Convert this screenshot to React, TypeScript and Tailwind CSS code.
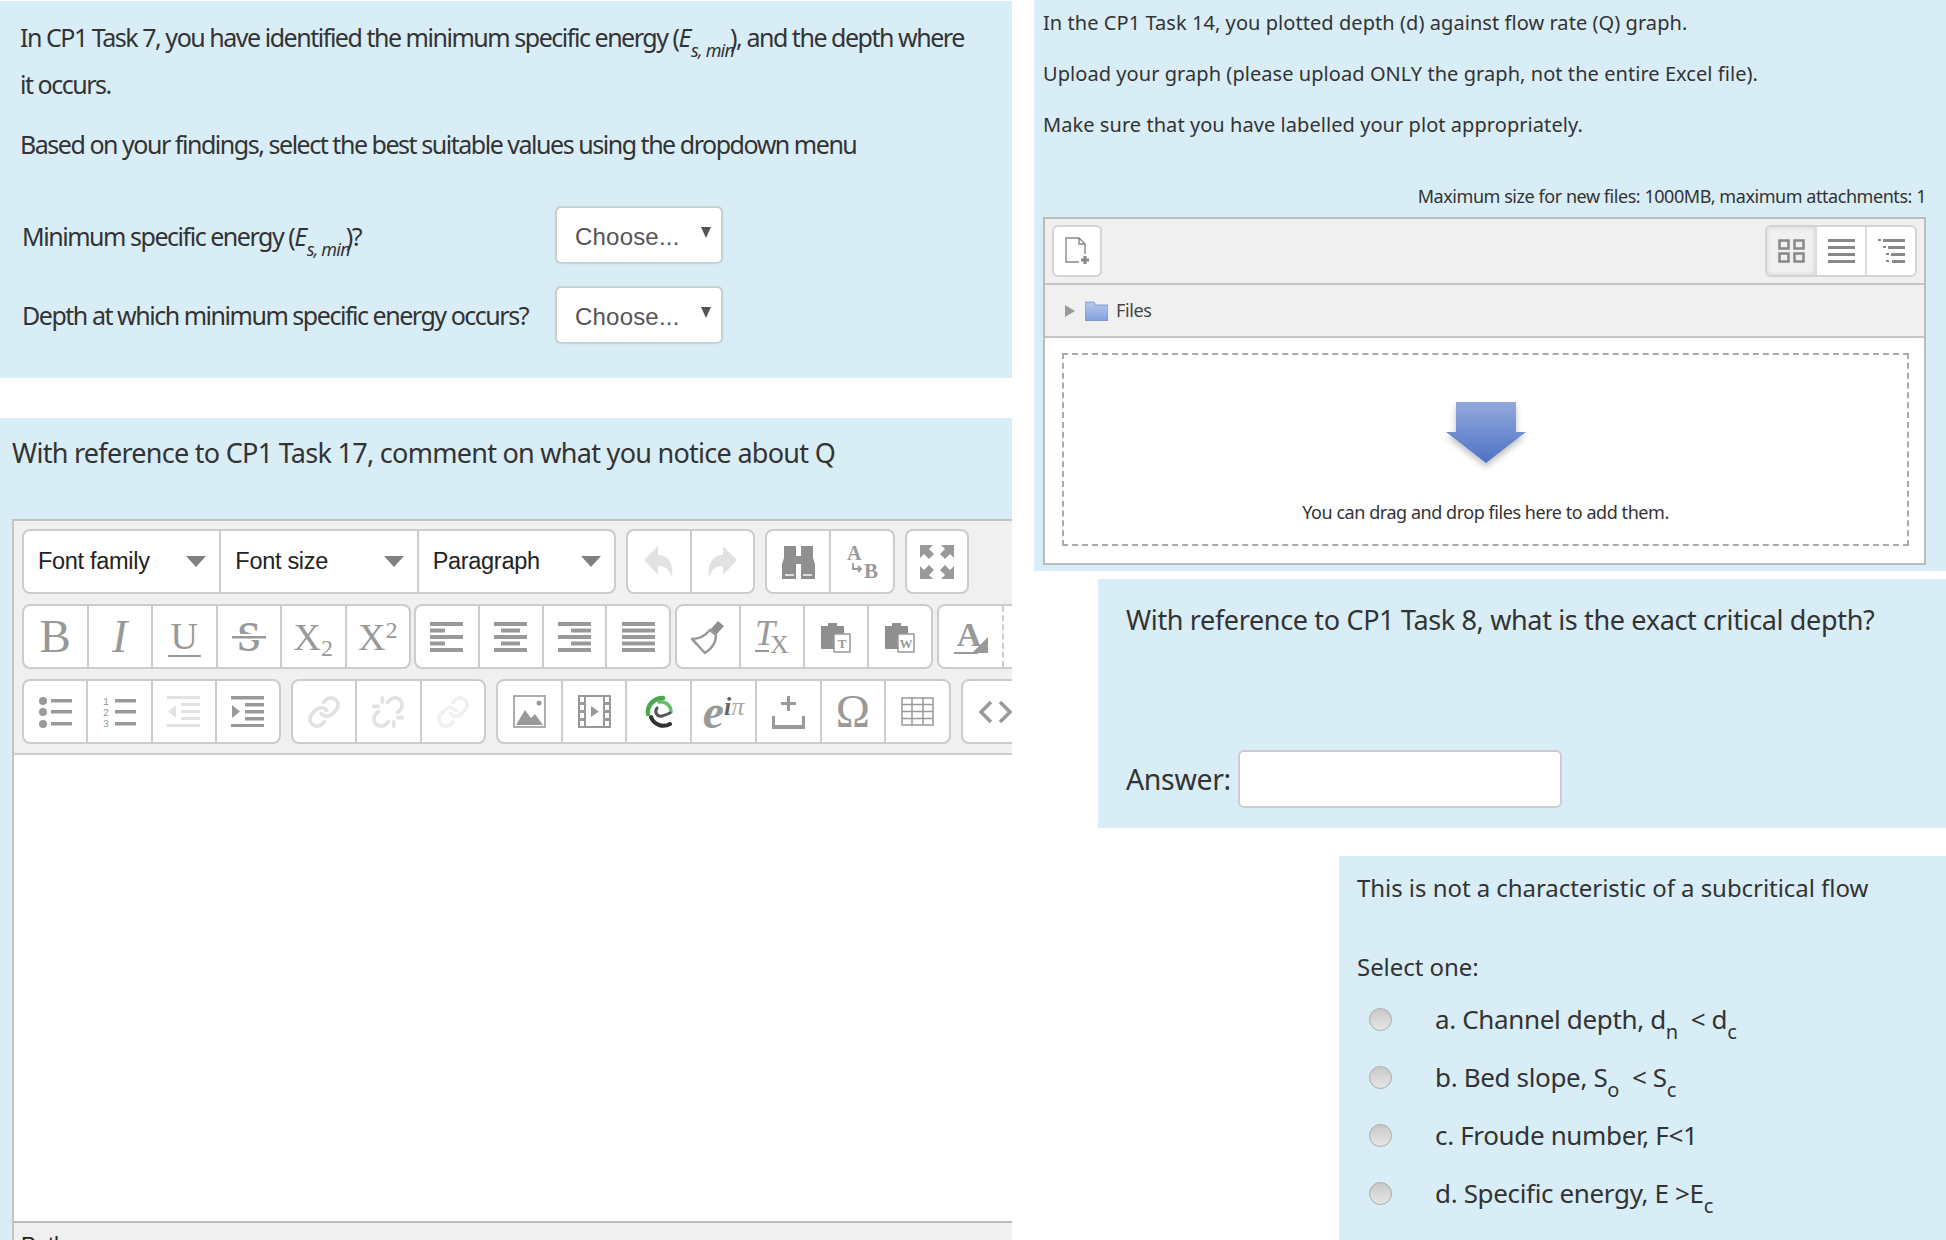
import type { ReactNode } from "react";
import { Link as LinkIcon, Unlink } from "lucide-react";

const sans = "font-['Noto_Sans',sans-serif]";

function SubE({ label = "s, min" }: { label?: string }) {
  return (
    <>
      <i>E</i>
      <sub className="ml-[1px] mr-[-4px] bottom-[-0.55em] text-[18px] italic tracking-[-0.8px]">{label}</sub>
    </>
  );
}

function Choose() {
  return (
    <div className="flex h-[56px] w-[166px] items-start rounded-[5px] border border-[#ccc] bg-white pl-[18px] pr-[10px] shadow-[0_0_2px_#999] font-['Liberation_Sans',sans-serif] text-[24px] text-[#555]">
      <span className="mt-[11px] tracking-[0.2px]">Choose...</span>
      <svg className="ml-auto mt-[19px]" width="10" height="11" viewBox="0 0 10 11">
        <path d="M0 0h10L5 11z" fill="#555" />
      </svg>
    </div>
  );
}

function Group({ className, children }: { className: string; children: ReactNode }) {
  return (
    <div className={`flex h-[65px] shrink-0 overflow-hidden rounded-[8px] border-2 border-[#ccc] bg-white ${className}`}>
      {children}
    </div>
  );
}

function Cell({ children }: { children: ReactNode }) {
  return (
    <div className="flex flex-1 items-center justify-center border-r-2 border-[#ccc] last:border-r-0 text-[#999]">
      {children}
    </div>
  );
}

function DropCell({ label }: { label: string }) {
  return (
    <div className="flex flex-1 items-center border-r-2 border-[#ccc] pl-[14px] pr-[13px] last:border-r-0 font-['Liberation_Sans',sans-serif] text-[23.5px] tracking-[-0.3px] text-[#222]">
      <span className="pt-[1px]">{label}</span>
      <svg className="ml-auto" width="20" height="11" viewBox="0 0 20 11">
        <path d="M0 0h20L10 11z" fill="#808080" />
      </svg>
    </div>
  );
}

function Lines({ rows, color = "#999" }: { rows: [number, number][]; color?: string }) {
  return (
    <svg width="33" height="30" viewBox="0 0 33 30">
      {rows.map(([x, w], i) => (
        <rect key={i} x={x} y={i * 6.5} width={w} height="4" fill={color} />
      ))}
    </svg>
  );
}

function Serif({ className, children }: { className: string; children: ReactNode }) {
  return <span className={`font-['Liberation_Serif',serif] leading-none text-[#999] ${className}`}>{children}</span>;
}

function Clip({ letter }: { letter: string }) {
  return (
    <svg width="30" height="33" viewBox="0 0 30 33">
      <path d="M0 6h7V3h9v3h7v9h-9v14H0z" fill="#8f8f8f" />
      <rect x="13" y="14" width="16" height="18" fill="#fff" stroke="#999" strokeWidth="1.5" />
      <text x="21" y="28" textAnchor="middle" fontSize="13" fontFamily="Liberation Serif" fontWeight="700" fill="#999">
        {letter}
      </text>
    </svg>
  );
}

function Radio() {
  return (
    <span className="h-[23px] w-[23px] shrink-0 rounded-full border border-[#aaa] bg-gradient-to-b from-[#c8c8c8] to-[#e6e6e6]" />
  );
}

export default function App() {
  return (
    <div className={`flex h-[1240px] w-[1946px] overflow-hidden bg-white text-[#333] ${sans}`}>
      <div className="flex w-[1012px] shrink-0 flex-col pt-[1px]">
        <section className="h-[377px] bg-[#d9edf7] pl-[20px] text-[25px] tracking-[-1.47px]">
          <p className="pt-[13px] leading-[47px]">
            In CP1 Task 7, you have identified the minimum specific energy (<SubE />), and the depth where
            <br />
            it occurs.
          </p>
          <p className="mt-[13px] leading-[47px]">Based on your findings, select the best suitable values using the dropdown menu</p>
          <div className="mt-[39px] flex items-center pl-[2px]">
            <span className="w-[534px] pt-[3px]">Minimum specific energy (<SubE />)?</span>
            <Choose />
          </div>
          <div className="mt-[24px] flex items-center pl-[2px]">
            <span className="w-[534px] pt-[2px]">Depth at which minimum specific energy occurs?</span>
            <Choose />
          </div>
        </section>

        <section className="mt-[40px] flex min-h-0 flex-1 flex-col bg-[#d9edf7] pl-[12px]">
          <h2 className="h-[101px] pt-[17px] text-[27px] font-normal leading-[36px] tracking-[-0.72px]">
            With reference to CP1 Task 17, comment on what you notice about Q
          </h2>
          <div className="flex min-h-0 flex-1 flex-col border-l-2 border-t-2 border-[#c4c4c4] bg-white">
            <div className="flex h-[234px] shrink-0 flex-col gap-[10px] overflow-hidden border-b-2 border-[#ccc] bg-[#f0f0f0] pl-[8px] pt-[8px]">
              <div className="flex gap-[10px]">
                <Group className="w-[594px]">
                  <DropCell label="Font family" />
                  <DropCell label="Font size" />
                  <DropCell label="Paragraph" />
                </Group>
                <Group className="w-[129px]">
                  <Cell>
                    <svg width="30" height="34" viewBox="0 0 30 34">
                      <path d="M14 1v9c10 0 16 8 14 23-2-8-6-12-14-12v9L0 15z" fill="#e2e2e2" />
                    </svg>
                  </Cell>
                  <Cell>
                    <svg width="30" height="34" viewBox="0 0 30 34">
                      <path d="M16 1v9C6 10 0 18 2 33c2-8 6-12 14-12v9l14-15z" fill="#e2e2e2" />
                    </svg>
                  </Cell>
                </Group>
                <Group className="w-[130px]">
                  <Cell>
                    <svg width="33" height="34" viewBox="0 0 33 34">
                      <path d="M2 1h12v10h5V1h12v12l2 6v15H19V19h-5v15H0V19l2-6z" fill="#8f8f8f" />
                      <rect x="3" y="29" width="9" height="2" fill="#ddd" />
                      <rect x="21" y="29" width="9" height="2" fill="#ddd" />
                    </svg>
                  </Cell>
                  <Cell>
                    <svg width="33" height="34" viewBox="0 0 33 34">
                      <text x="1" y="15" fontSize="20" fontWeight="700" fontFamily="Liberation Serif" fill="#999">A</text>
                      <text x="18" y="33" fontSize="21" fontWeight="700" fontFamily="Liberation Serif" fill="#999">B</text>
                      <path d="M7 18v6h8m-3-3l3 3-3 3" fill="none" stroke="#999" strokeWidth="1.8" />
                    </svg>
                  </Cell>
                </Group>
                <Group className="w-[64px]">
                  <Cell>
                    <svg width="34" height="34" viewBox="0 0 34 34" fill="#999">
                      <path d="M0 0h13l-4 4 5 5-5 5-5-5-4 4zM34 0v13l-4-4-5 5-5-5 5-5-4-4zM0 34V21l4 4 5-5 5 5-5 5 4 4zM34 34H21l4-4-5-5 5-5 5 5 4-4z" />
                    </svg>
                  </Cell>
                </Group>
              </div>

              <div className="flex">
                <Group className="w-[389px]">
                  <Cell><Serif className="text-[47px] font-normal">B</Serif></Cell>
                  <Cell><Serif className="text-[46px] italic">I</Serif></Cell>
                  <Cell><Serif className="border-b-2 border-[#999] px-[3px] text-[38px]">U</Serif></Cell>
                  <Cell>
                    <svg width="34" height="34" viewBox="0 0 34 34">
                      <text x="17" y="31" textAnchor="middle" fontSize="42" fontWeight="700" fontFamily="Liberation Serif" fill="#999">S</text>
                      <rect y="14" width="34" height="6" fill="#fff" />
                      <rect y="16" width="34" height="2.5" fill="#999" />
                    </svg>
                  </Cell>
                  <Cell><Serif className="text-[38px]">X<sub className="text-[24px]">2</sub></Serif></Cell>
                  <Cell><Serif className="text-[38px]">X<sup className="text-[24px]">2</sup></Serif></Cell>
                </Group>
                <Group className="ml-[3px] w-[257px]">
                  <Cell><Lines rows={[[0, 33], [0, 15], [0, 33], [0, 15], [0, 33]]} /></Cell>
                  <Cell><Lines rows={[[0, 33], [7, 19], [0, 33], [7, 19], [0, 33]]} /></Cell>
                  <Cell><Lines rows={[[0, 33], [13, 20], [0, 33], [13, 20], [0, 33]]} /></Cell>
                  <Cell><Lines rows={[[0, 33], [0, 33], [0, 33], [0, 33], [0, 33]]} /></Cell>
                </Group>
                <Group className="ml-[4px] w-[258px]">
                  <Cell>
                    <svg width="34" height="34" viewBox="0 0 34 34">
                      <path d="M27 1l6 5-8 9-6-5z" fill="#8f8f8f" />
                      <path d="M19 10l6 5c0 6-3 13-11 18C10 29 5 23 1 19c8 0 13-3 18-9z" fill="#fff" stroke="#999" strokeWidth="2.5" />
                    </svg>
                  </Cell>
                  <Cell>
                    <svg width="34" height="34" viewBox="0 0 34 34">
                      <text x="0" y="25" fontSize="36" fontStyle="italic" fontFamily="Liberation Serif" fill="#999">T</text>
                      <text x="15" y="33" fontSize="26" fontFamily="Liberation Serif" fill="#999">X</text>
                      <rect x="0" y="30" width="14" height="2" fill="#999" />
                    </svg>
                  </Cell>
                  <Cell><Clip letter="T" /></Cell>
                  <Cell><Clip letter="W" /></Cell>
                </Group>
                <Group className="ml-[4px] w-[100px] !border-r-0">
                  <div className="flex w-[63px] items-center justify-center">
                    <svg width="34" height="36" viewBox="0 0 34 36">
                      <text x="15" y="27" textAnchor="middle" fontSize="34" fontWeight="700" fontFamily="Liberation Serif" fill="#999">A</text>
                      <path d="M34 18v16H18z" fill="#999" />
                      <rect y="33" width="24" height="2" fill="#999" />
                    </svg>
                  </div>
                  <div className="h-full border-l-2 border-dashed border-[#ccc]" />
                </Group>
              </div>

              <div className="flex gap-[10px]">
                <Group className="w-[259px]">
                  <Cell>
                    <svg width="33" height="32" viewBox="0 0 33 32" fill="#999">
                      <circle cx="4" cy="5" r="4" /><circle cx="4" cy="16" r="4" /><circle cx="4" cy="28" r="4" />
                      <rect x="12" y="3" width="21" height="3.500" /><rect x="12" y="14" width="21" height="3.500" /><rect x="12" y="26" width="21" height="3.500" />
                    </svg>
                  </Cell>
                  <Cell>
                    <svg width="33" height="32" viewBox="0 0 33 32" fill="#999">
                      <text x="0" y="9" fontSize="10" fontFamily="Liberation Mono">1</text>
                      <text x="0" y="20" fontSize="10" fontFamily="Liberation Mono">2</text>
                      <text x="0" y="31" fontSize="10" fontFamily="Liberation Mono">3</text>
                      <rect x="12" y="3" width="21" height="3.500" /><rect x="12" y="14" width="21" height="3.500" /><rect x="12" y="26" width="21" height="3.500" />
                    </svg>
                  </Cell>
                  <Cell>
                    <svg width="33" height="31" viewBox="0 0 33 31" fill="#e2e2e2">
                      <rect width="33" height="3" /><rect x="14" y="7" width="19" height="3" /><rect x="14" y="14" width="19" height="3" /><rect x="14" y="21" width="19" height="3" /><rect y="28" width="33" height="3" />
                      <path d="M9 9v13L1 15.500z" />
                    </svg>
                  </Cell>
                  <Cell>
                    <svg width="33" height="31" viewBox="0 0 33 31" fill="#999">
                      <rect width="33" height="3.500" /><rect x="14" y="7" width="19" height="3.500" /><rect x="14" y="14" width="19" height="3.500" /><rect x="14" y="21" width="19" height="3.500" /><rect y="28" width="33" height="3.500" />
                      <path d="M1 9v13l8-6.500z" />
                    </svg>
                  </Cell>
                </Group>
                <Group className="w-[195px]">
                  <Cell><LinkIcon size={34} strokeWidth={2.6} className="text-[#e2e2e2]" /></Cell>
                  <Cell><Unlink size={34} strokeWidth={2.6} className="text-[#e2e2e2]" /></Cell>
                  <Cell><LinkIcon size={34} strokeWidth={2.6} className="text-[#f0f0f0]" /></Cell>
                </Group>
                <Group className="w-[455px]">
                  <Cell>
                    <svg width="33" height="33" viewBox="0 0 33 33">
                      <rect x="1" y="1" width="31" height="31" fill="#fff" stroke="#999" strokeWidth="1.6" />
                      <path d="M3 30l9-15 6 8 4-4 8 11z" fill="#999" />
                      <circle cx="26" cy="8" r="2.500" fill="#999" />
                    </svg>
                  </Cell>
                  <Cell>
                    <svg width="33" height="33" viewBox="0 0 33 33" fill="#999">
                      <path fillRule="evenodd" d="M0 0h33v33H0zM2 2v5h4V2zM2 10v5h4v-5zM2 18v5h4v-5zM2 26v5h4v-5zM27 2v5h4V2zM27 10v5h4v-5zM27 18v5h4v-5zM27 26v5h4v-5zM8 2v29h17V2z" />
                      <path d="M13 11v11l8-5.500z" />
                    </svg>
                  </Cell>
                  <Cell>
                    <svg width="30" height="34" viewBox="0 0 30 34" fill="none" strokeLinecap="round">
                      <path d="M4 19C3 10 10 3 19 3" stroke="#4aa84f" strokeWidth="4.500" />
                      <path d="M15 7c6-1 12 3 12 10" stroke="#66bb66" strokeWidth="3.500" />
                      <path d="M7 22c3 8 12 11 19 7" stroke="#333" strokeWidth="4" />
                      <path d="M13 13c-3 4 0 9 5 8 4-1 6-2 8-3" stroke="#555" strokeWidth="3" />
                    </svg>
                  </Cell>
                  <Cell>
                    <Serif className="text-[48px] font-bold italic text-[#666]">
                      e<sup className="text-[26px] text-[#666]">i<span className="font-normal text-[#aaa]">π</span></sup>
                    </Serif>
                  </Cell>
                  <Cell>
                    <svg width="33" height="34" viewBox="0 0 33 34" fill="#999">
                      <path d="M15 1h3v6h6v3h-6v6h-3v-6H9V7h6z" />
                      <path d="M0 21h3v9h27v-9h3v13H0z" />
                    </svg>
                  </Cell>
                  <Cell><Serif className="text-[46px]">Ω</Serif></Cell>
                  <Cell>
                    <svg width="33" height="29" viewBox="0 0 33 29" fill="none" stroke="#999" strokeWidth="1.5">
                      <rect x="1" y="1" width="31" height="27" />
                      <path d="M1 7.500h31M1 14.500h31M1 21.500h31M11 1v27M22 1v27" />
                    </svg>
                  </Cell>
                </Group>
                <Group className="w-[80px]">
                  <div className="flex w-[64px] items-center justify-center">
                    <svg width="33" height="24" viewBox="0 0 33 24" fill="none" stroke="#999" strokeWidth="3.500">
                      <path d="M12 2L2 12l10 10M21 2l10 10-10 10" />
                    </svg>
                  </div>
                </Group>
              </div>
            </div>
            <div className="flex-1" />
            <div className="h-[19px] shrink-0 overflow-hidden border-t-2 border-[#bbb] bg-[#f0f0f0] pl-[7px] pt-[9px] font-['Liberation_Sans',sans-serif] text-[22px] leading-[26px] text-[#222]">
              Path
            </div>
          </div>
        </section>
      </div>

      <div className="ml-[22px] flex min-w-0 flex-1 flex-col items-end">
        <section className="h-[571px] w-full shrink-0 bg-[#d9edf7] pl-[9px] pr-[20px] text-[20px] tracking-[0.06px]">
          <p className="pt-[8px] leading-[30px]">In the CP1 Task 14, you plotted depth (d) against flow rate (Q) graph.</p>
          <p className="mt-[21px] leading-[30px]">Upload your graph (please upload ONLY the graph, not the entire Excel file).</p>
          <p className="mt-[21px] leading-[30px]">Make sure that you have labelled your plot appropriately.</p>
          <p className="mt-[43px] text-right text-[18px] leading-[26px] tracking-[-0.45px]">Maximum size for new files: 1000MB, maximum attachments: 1</p>
          <div className="mt-[8px] h-[348px] border-2 border-[#bbb] bg-white">
            <div className="flex h-[66px] items-center justify-between border-b-2 border-[#c4c4c4] bg-[#f0f0f0] px-[7px]">
              <div className="flex h-[52px] w-[50px] items-center justify-center rounded-[6px] border-2 border-[#d4d4d4] bg-white">
                <svg width="26" height="30" viewBox="0 0 26 30" fill="none" stroke="#888" strokeWidth="1.400">
                  <path d="M15 26H2V2h13l6 6v10M15 2v6h6" />
                  <path d="M21 20v8M17 24h8" strokeWidth="3" />
                </svg>
              </div>
              <div className="flex h-[52px] w-[152px] overflow-hidden rounded-[6px] border-2 border-[#d4d4d4] bg-white">
                <div className="flex flex-1 items-center justify-center border-r-2 border-[#ddd] bg-[#f0f0f0] shadow-[inset_0_0_4px_#ccc]">
                  <svg width="27" height="24" viewBox="0 0 27 24" fill="none" stroke="#888" strokeWidth="2.500">
                    <rect x="1.500" y="1.500" width="9" height="8" /><rect x="16.500" y="1.500" width="9" height="8" />
                    <rect x="1.500" y="14.500" width="9" height="8" /><rect x="16.500" y="14.500" width="9" height="8" />
                  </svg>
                </div>
                <div className="flex flex-1 items-center justify-center border-r-2 border-[#ddd]">
                  <svg width="27" height="24" viewBox="0 0 27 24" fill="#888">
                    <rect width="27" height="3" /><rect y="7" width="27" height="3" /><rect y="14" width="27" height="3" /><rect y="21" width="27" height="3" />
                  </svg>
                </div>
                <div className="flex flex-1 items-center justify-center">
                  <svg width="27" height="24" viewBox="0 0 27 24" fill="#888">
                    <rect width="3" height="2" /><rect x="5" width="22" height="3" /><rect x="5" y="7" width="3" height="2" /><rect x="10" y="7" width="17" height="3" />
                    <rect x="8" y="14" width="3" height="2" /><rect x="13" y="14" width="14" height="3" /><rect x="8" y="21" width="3" height="2" /><rect x="14" y="21" width="13" height="3" />
                  </svg>
                </div>
              </div>
            </div>
            <div className="flex h-[53px] items-center gap-[10px] border-b-2 border-[#c4c4c4] bg-[#f0f0f0] pl-[20px] text-[18px] tracking-[-0.4px]">
              <svg width="10" height="12" viewBox="0 0 10 12"><path d="M0 0l10 6-10 6z" fill="#999" /></svg>
              <span className="flex items-center gap-[8px]">
                <svg width="23" height="20" viewBox="0 0 23 20">
                  <defs>
                    <linearGradient id="folder" x1="0" y1="0" x2="0" y2="1">
                      <stop offset="0" stopColor="#b9c9ea" />
                      <stop offset="1" stopColor="#7f9fdc" />
                    </linearGradient>
                  </defs>
                  <path d="M0 1h9l2 3h12v16H0z" fill="url(#folder)" stroke="#6f8fd0" strokeWidth="0.800" />
                </svg>
                <span className="text-[#444]">Files</span>
              </span>
            </div>
            <div className="pb-[18px] pl-[17px] pr-[15px] pt-[15px]">
              <div className="flex h-[193px] flex-col items-center border-2 border-dashed border-[#aaa] pt-[45px]">
                <svg width="92" height="78" viewBox="0 0 92 78">
                  <defs>
                    <linearGradient id="arrow" x1="0" y1="0" x2="0" y2="1">
                      <stop offset="0" stopColor="#93a9dc" />
                      <stop offset="1" stopColor="#4f72c6" />
                    </linearGradient>
                    <filter id="arrowShadow" x="-20%" y="-20%" width="140%" height="150%">
                      <feDropShadow dx="0" dy="4" stdDeviation="3" floodColor="#000" floodOpacity="0.25" />
                    </filter>
                  </defs>
                  <path d="M16 2h60v30h10L46 63 6 32h10z" fill="url(#arrow)" filter="url(#arrowShadow)" />
                </svg>
                <p className="mt-[21px] text-[18px] leading-[26px] tracking-[-0.45px] text-[#333]">You can drag and drop files here to add them.</p>
              </div>
            </div>
          </div>
        </section>

        <section className="mt-[8px] h-[249px] w-[848px] shrink-0 bg-[#d9edf7] pl-[28px] text-[27px] tracking-[-0.35px]">
          <p className="pt-[23px] leading-[36px]">With reference to CP1 Task 8, what is the exact critical depth?</p>
          <div className="mt-[112px] flex items-center">
            <label className="w-[112px] text-[28.5px]">Answer:</label>
            <div className="h-[58px] w-[324px] rounded-[6px] border-2 border-[#ccc] bg-white" />
          </div>
        </section>

        <section className="mt-[28px] min-h-0 w-[607px] flex-1 bg-[#d9edf7] pl-[18px] text-[24px] tracking-[-0.05px]">
          <p className="pt-[16px] leading-[32px]">This is not a characteristic of a subcritical flow</p>
          <p className="mt-[47px] leading-[32px]">Select one:</p>
          <ul className="mt-[20px] flex flex-col gap-[25px] pl-[12px] text-[26px] tracking-[-0.35px]">
            {[
              <>a. Channel depth, d<sub>n</sub>&nbsp; &lt; d<sub>c</sub></>,
              <>b. Bed slope, S<sub>o</sub>&nbsp; &lt; S<sub>c</sub></>,
              <>c. Froude number, F&lt;1</>,
              <>d. Specific energy, E &gt;E<sub>c</sub></>,
            ].map((label, i) => (
              <li key={i} className="flex h-[33px] items-center gap-[43px]">
                <Radio />
                <span className="-mt-[1px] leading-[33px] [&>sub]:bottom-[-0.5em] [&>sub]:text-[20px]">{label}</span>
              </li>
            ))}
          </ul>
        </section>
      </div>
    </div>
  );
}
